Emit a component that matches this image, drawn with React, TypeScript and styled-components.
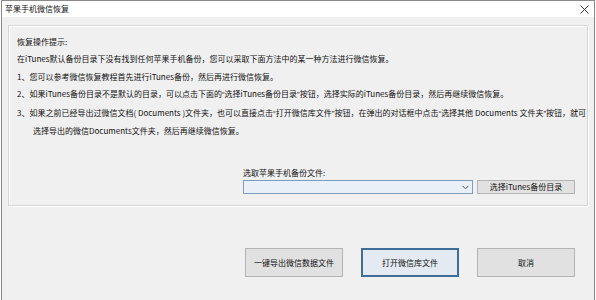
import React, { FC, ReactNode } from "react";
import styled, { createGlobalStyle } from "styled-components";

const GlobalStyle = createGlobalStyle`
  body {
    margin: 0;
    background: #ffffff;
    font-family: "Noto Sans CJK SC", "Liberation Sans", sans-serif;
    color: #111;
  }
`;

// quotes in the CJK font are full-width, the original draws them narrow
const Q: FC<{ children: ReactNode }> = ({ children }) => (
  <>
    <Quote>“</Quote>
    {children}
    <Quote>”</Quote>
  </>
);

const hints: { text: ReactNode; indent?: boolean }[] = [
  {
    text: "在iTunes默认备份目录下没有找到任何苹果手机备份，您可以采取下面方法中的某一种方法进行微信恢复。",
  },
  { text: "1、您可以参考微信恢复教程首先进行iTunes备份，然后再进行微信恢复。" },
  {
    text: (
      <>
        2、如果iTunes备份目录不是默认的目录，可以点击下面的<Q>选择iTunes备份目录</Q>
        按钮，选择实际的iTunes备份目录，然后再继续微信恢复。
      </>
    ),
  },
  {
    text: (
      <>
        3、如果之前已经导出过微信文档( Documents )文件夹，也可以直接点击<Q>打开微信库文件</Q>
        按钮，在弹出的对话框中点击<Q>选择其他 Documents 文件夹</Q>按钮，就可
      </>
    ),
  },
  { text: "选择导出的微信Documents文件夹，然后再继续微信恢复。", indent: true },
];

const App: FC = (): JSX.Element => {
  return (
    <>
      <GlobalStyle />
      <Window>
        <TitleBar>
          <Title>苹果手机微信恢复</Title>
          <CloseBtn>
            <svg width="9" height="9" viewBox="0 0 9 9">
              <path d="M0.5 0.5 L8.5 8.5 M8.5 0.5 L0.5 8.5" stroke="#333" strokeWidth="1" />
            </svg>
          </CloseBtn>
        </TitleBar>
        <Content>
          <GroupBox>
            <HintTitle>恢复操作提示:</HintTitle>
            {hints.map((h, i) => (
              <HintLine key={i} indent={h.indent}>
                {h.text}
              </HintLine>
            ))}
            <FilePicker>
              <FieldLabel>选取苹果手机备份文件:</FieldLabel>
              <FieldRow>
                <Combo>
                  <svg width="7" height="5" viewBox="0 0 7 5">
                    <path d="M0.5 0.8 L3.5 3.8 L6.5 0.8" fill="none" stroke="#555" strokeWidth="1" />
                  </svg>
                </Combo>
                <SmallButton type="button">选择iTunes备份目录</SmallButton>
              </FieldRow>
            </FilePicker>
          </GroupBox>
          <ButtonRow>
            <Button type="button">一键导出微信数据文件</Button>
            <Button type="button" primary>
              打开微信库文件
            </Button>
            <Button type="button">取消</Button>
          </ButtonRow>
        </Content>
      </Window>
    </>
  );
};

export default App;

const Window = styled.div`
  margin-left: 1px;
  width: 594px;
  height: 300px;
  box-sizing: border-box;
  border: 1px solid #8a8a8a;
  border-bottom: none;
  background: #f0f0f0;
  display: flex;
  flex-direction: column;
`;
const TitleBar = styled.div`
  height: 16px;
  background: #ffffff;
  display: flex;
  align-items: center;
  justify-content: space-between;
  padding: 0 4px 0 3px;
`;
const Title = styled.span`
  font-size: 8px;
  line-height: 16px;
  color: #111;
`;
const CloseBtn = styled.div`
  display: flex;
  align-items: center;
  margin-right: 1px;
`;
const Content = styled.div`
  padding: 8px 6px 0 6px;
  display: flex;
  flex-direction: column;
`;
const GroupBox = styled.div`
  height: 181px;
  box-sizing: border-box;
  border: 1px solid #d6d6d6;
  box-shadow: inset 1px 1px 0 #ffffff, 1px 1px 0 #ffffff;
  padding: 7px 12px 11px 8px;
  display: flex;
  flex-direction: column;
`;
const HintTitle = styled.div`
  font-size: 8px;
  line-height: 17.4px;
  white-space: nowrap;
`;
const HintLine = styled.div<{ indent?: boolean }>`
  font-size: 8px;
  line-height: 17.4px;
  white-space: nowrap;
  padding-left: ${(p) => (p.indent ? "16px" : "0")};
`;
const Quote = styled.span`
  font-family: "Liberation Sans", sans-serif;
`;
const FilePicker = styled.div`
  margin-top: auto;
  align-self: flex-end;
  display: flex;
  flex-direction: column;
`;
const FieldLabel = styled.div`
  font-size: 8px;
  line-height: 12px;
  margin-bottom: 1px;
`;
const FieldRow = styled.div`
  display: flex;
  gap: 4px;
`;
const Combo = styled.div`
  width: 230px;
  height: 14px;
  box-sizing: border-box;
  border: 1px solid #7f9db9;
  background: #e9f0f8;
  display: flex;
  align-items: center;
  justify-content: flex-end;
  padding-right: 3px;
`;
const SmallButton = styled.button`
  width: 98px;
  height: 14px;
  box-sizing: border-box;
  border: 1px solid #b4b4b4;
  background: #e1e1e1;
  font-family: inherit;
  font-size: 8px;
  line-height: 12px;
  padding: 0;
  color: #111;
`;
const ButtonRow = styled.div`
  display: flex;
  justify-content: flex-end;
  gap: 18px;
  margin-top: 42px;
  padding-right: 13px;
`;
const Button = styled.button<{ primary?: boolean }>`
  width: 98px;
  height: 29px;
  box-sizing: border-box;
  border: ${(p) => (p.primary ? "2px solid #3f6f98" : "1px solid #b4b4b4")};
  background: ${(p) => (p.primary ? "#e3eaf1" : "#e1e1e1")};
  font-family: inherit;
  font-size: 8px;
  padding: 0;
  color: #111;
`;
